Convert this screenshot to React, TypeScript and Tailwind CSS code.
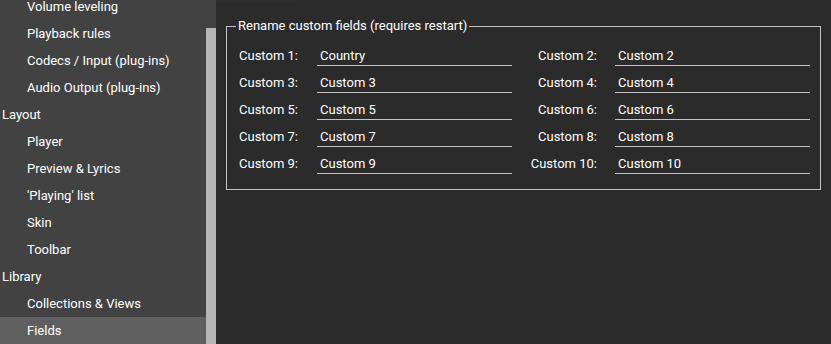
import React from "react";

const navItems: { label: string; sub: boolean; selected?: boolean }[] = [
  { label: "Volume leveling", sub: true },
  { label: "Playback rules", sub: true },
  { label: "Codecs / Input (plug-ins)", sub: true },
  { label: "Audio Output (plug-ins)", sub: true },
  { label: "Layout", sub: false },
  { label: "Player", sub: true },
  { label: "Preview & Lyrics", sub: true },
  { label: "'Playing' list", sub: true },
  { label: "Skin", sub: true },
  { label: "Toolbar", sub: true },
  { label: "Library", sub: false },
  { label: "Collections & Views", sub: true },
  { label: "Fields", sub: true, selected: true },
];

const rows: [string, string, string, string][] = [
  ["Custom 1:", "Country", "Custom 2:", "Custom 2"],
  ["Custom 3:", "Custom 3", "Custom 4:", "Custom 4"],
  ["Custom 5:", "Custom 5", "Custom 6:", "Custom 6"],
  ["Custom 7:", "Custom 7", "Custom 8:", "Custom 8"],
  ["Custom 9:", "Custom 9", "Custom 10:", "Custom 10"],
];

function Field({ value, className }: { value: string; className?: string }) {
  return (
    <div
      className={
        "w-[195px] h-[19px] border-b border-[#c4c4c4] pl-[3px] leading-[18px] text-white " +
        (className ?? "")
      }
    >
      {value}
    </div>
  );
}

export default function App() {
  return (
    <div
      className="flex h-[344px] w-[831px] overflow-hidden text-[13px] text-white"
      style={{ fontFamily: "Roboto, 'Noto Sans', sans-serif" }}
    >
      <div className="w-[206px] shrink-0 bg-[#424242] overflow-hidden">
        <div className="-mt-[7px] flex flex-col">
          {navItems.map((it) => (
            <div
              key={it.label}
              className={
                "h-[27px] flex items-center " +
                (it.sub ? "pl-[27px] " : "pl-[2px] ") +
                (it.selected ? "bg-[#5f5f5f]" : "")
              }
            >
              {it.label}
            </div>
          ))}
        </div>
      </div>
      <div className="w-[10px] shrink-0 bg-[#424242] flex flex-col">
        <div className="mt-[28px] flex-1 bg-[#b5b5b5]" />
      </div>
      <div className="flex-1 bg-[#2b2b2b] flex flex-col">
        <div className="h-[3px] w-[80px] bg-[#2f2f2f]" />
        <fieldset className="ml-[10px] mt-[15px] w-[595px] border border-[#c4c4c4] p-0 pb-[15px]">
          <legend className="ml-[9px] px-[2px] leading-[16px] text-white">
            Rename custom fields (requires restart)
          </legend>
          <div className="pt-[13px] flex flex-col gap-[8px]">
            {rows.map(([l1, v1, l2, v2]) => (
              <div key={l1} className="flex items-start">
                <div className="w-[71px] pr-0 h-[19px] leading-[18px] text-right">{l1}</div>
                <Field value={v1} className="ml-[19px]" />
                <div className="w-[85px] h-[19px] leading-[18px] text-right">{l2}</div>
                <Field value={v2} className="ml-[18px]" />
              </div>
            ))}
          </div>
        </fieldset>
      </div>
    </div>
  );
}
